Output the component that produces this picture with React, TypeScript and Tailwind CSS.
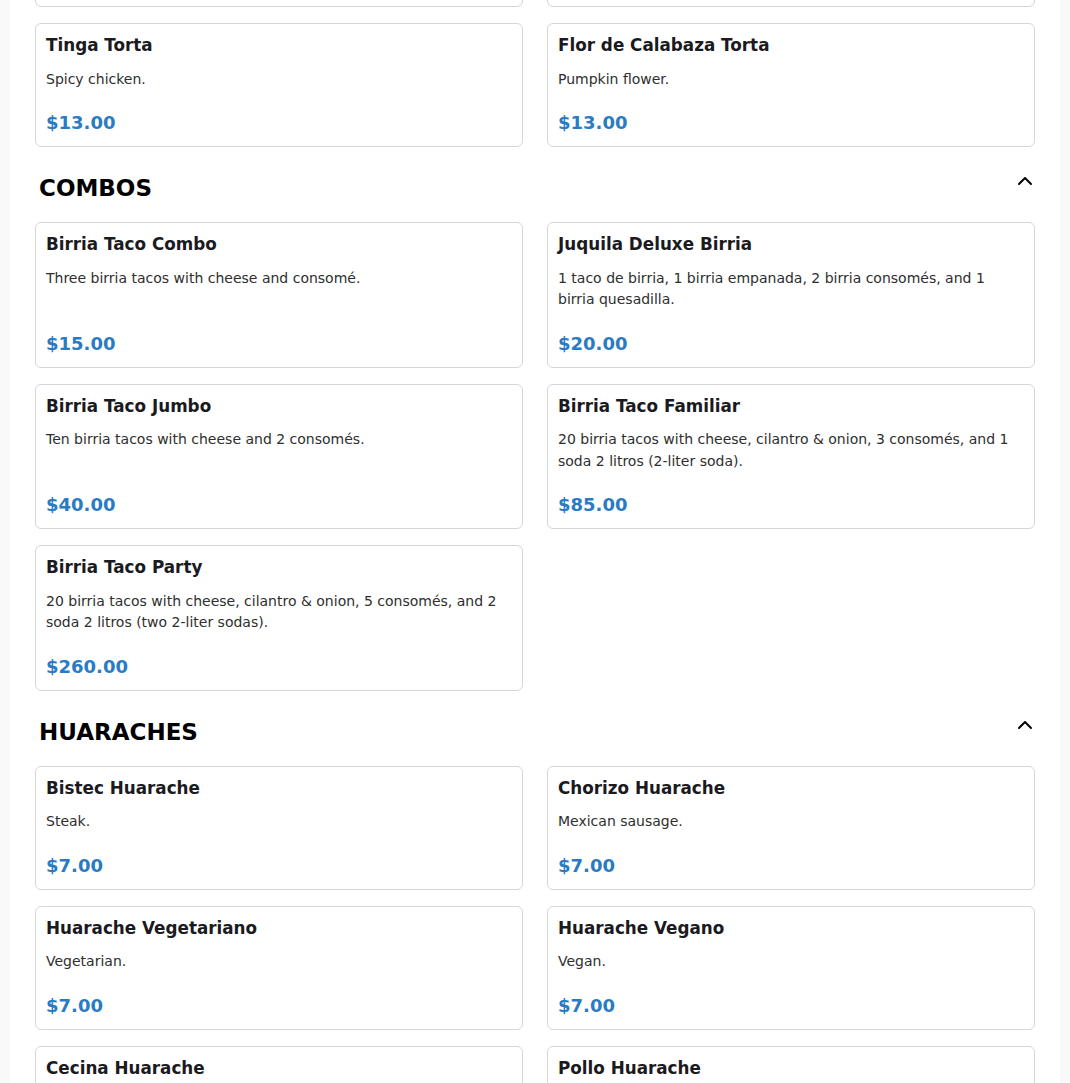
import { ChevronUp } from "lucide-react";

interface Item {
  name: string;
  desc: string;
  price: string;
}

const tortasTail: Item[] = [
  { name: "Pastor Torta", desc: "Marinated pork.", price: "$13.00" },
  { name: "Asada Torta", desc: "Grilled steak.", price: "$13.00" },
  { name: "Tinga Torta", desc: "Spicy chicken.", price: "$13.00" },
  { name: "Flor de Calabaza Torta", desc: "Pumpkin flower.", price: "$13.00" },
];

const combos: Item[] = [
  { name: "Birria Taco Combo", desc: "Three birria tacos with cheese and consomé.", price: "$15.00" },
  {
    name: "Juquila Deluxe Birria",
    desc: "1 taco de birria, 1 birria empanada, 2 birria consomés, and 1 birria quesadilla.",
    price: "$20.00",
  },
  { name: "Birria Taco Jumbo", desc: "Ten birria tacos with cheese and 2 consomés.", price: "$40.00" },
  {
    name: "Birria Taco Familiar",
    desc: "20 birria tacos with cheese, cilantro & onion, 3 consomés, and 1 soda 2 litros (2-liter soda).",
    price: "$85.00",
  },
  {
    name: "Birria Taco Party",
    desc: "20 birria tacos with cheese, cilantro & onion, 5 consomés, and 2 soda 2 litros (two 2-liter sodas).",
    price: "$260.00",
  },
];

const huaraches: Item[] = [
  { name: "Bistec Huarache", desc: "Steak.", price: "$7.00" },
  { name: "Chorizo Huarache", desc: "Mexican sausage.", price: "$7.00" },
  { name: "Huarache Vegetariano", desc: "Vegetarian.", price: "$7.00" },
  { name: "Huarache Vegano", desc: "Vegan.", price: "$7.00" },
  { name: "Cecina Huarache", desc: "Salted beef.", price: "$7.00" },
  { name: "Pollo Huarache", desc: "Chicken.", price: "$7.00" },
];

function MenuCard({ item }: { item: Item }) {
  return (
    <div className="flex flex-col rounded-md border border-[#d6d6d6] bg-white px-[10px] pt-[11px] pb-[10px]">
      <h3 className="text-[16.8px] font-bold leading-[20.5px] text-[#1a1a20]">{item.name}</h3>
      <p className="mt-[13px] mb-[19px] text-[14px] leading-[21.5px] text-[#2e2e2e]">{item.desc}</p>
      <div className="mt-auto text-[18px] font-bold leading-[27px] text-[#2b7bc4]">{item.price}</div>
    </div>
  );
}

function Grid({ items }: { items: Item[] }) {
  return (
    <div className="grid grid-cols-2 gap-x-6 gap-y-4">
      {items.map((it) => (
        <MenuCard key={it.name} item={it} />
      ))}
    </div>
  );
}

function Section({ title, items }: { title: string; items: Item[] }) {
  return (
    <section>
      <div className="flex items-start justify-between pt-[27px] pb-5">
        <h2 className="pl-1 text-[23px] font-bold leading-[28px] text-black">{title}</h2>
        <button className="-mt-[5px] -mr-[2px] text-black">
          <ChevronUp size={24} strokeWidth={2} />
        </button>
      </div>
      <Grid items={items} />
    </section>
  );
}

export default function App() {
  return (
    <div className="h-screen overflow-hidden bg-[#f9f9f9] font-['DejaVu_Sans',sans-serif]">
      <div className="mx-auto w-[1050px] bg-white px-[25px] pb-10">
        <div className="-mt-[117px]">
          <Grid items={tortasTail} />
          <Section title="COMBOS" items={combos} />
          <Section title="HUARACHES" items={huaraches} />
        </div>
      </div>
    </div>
  );
}
